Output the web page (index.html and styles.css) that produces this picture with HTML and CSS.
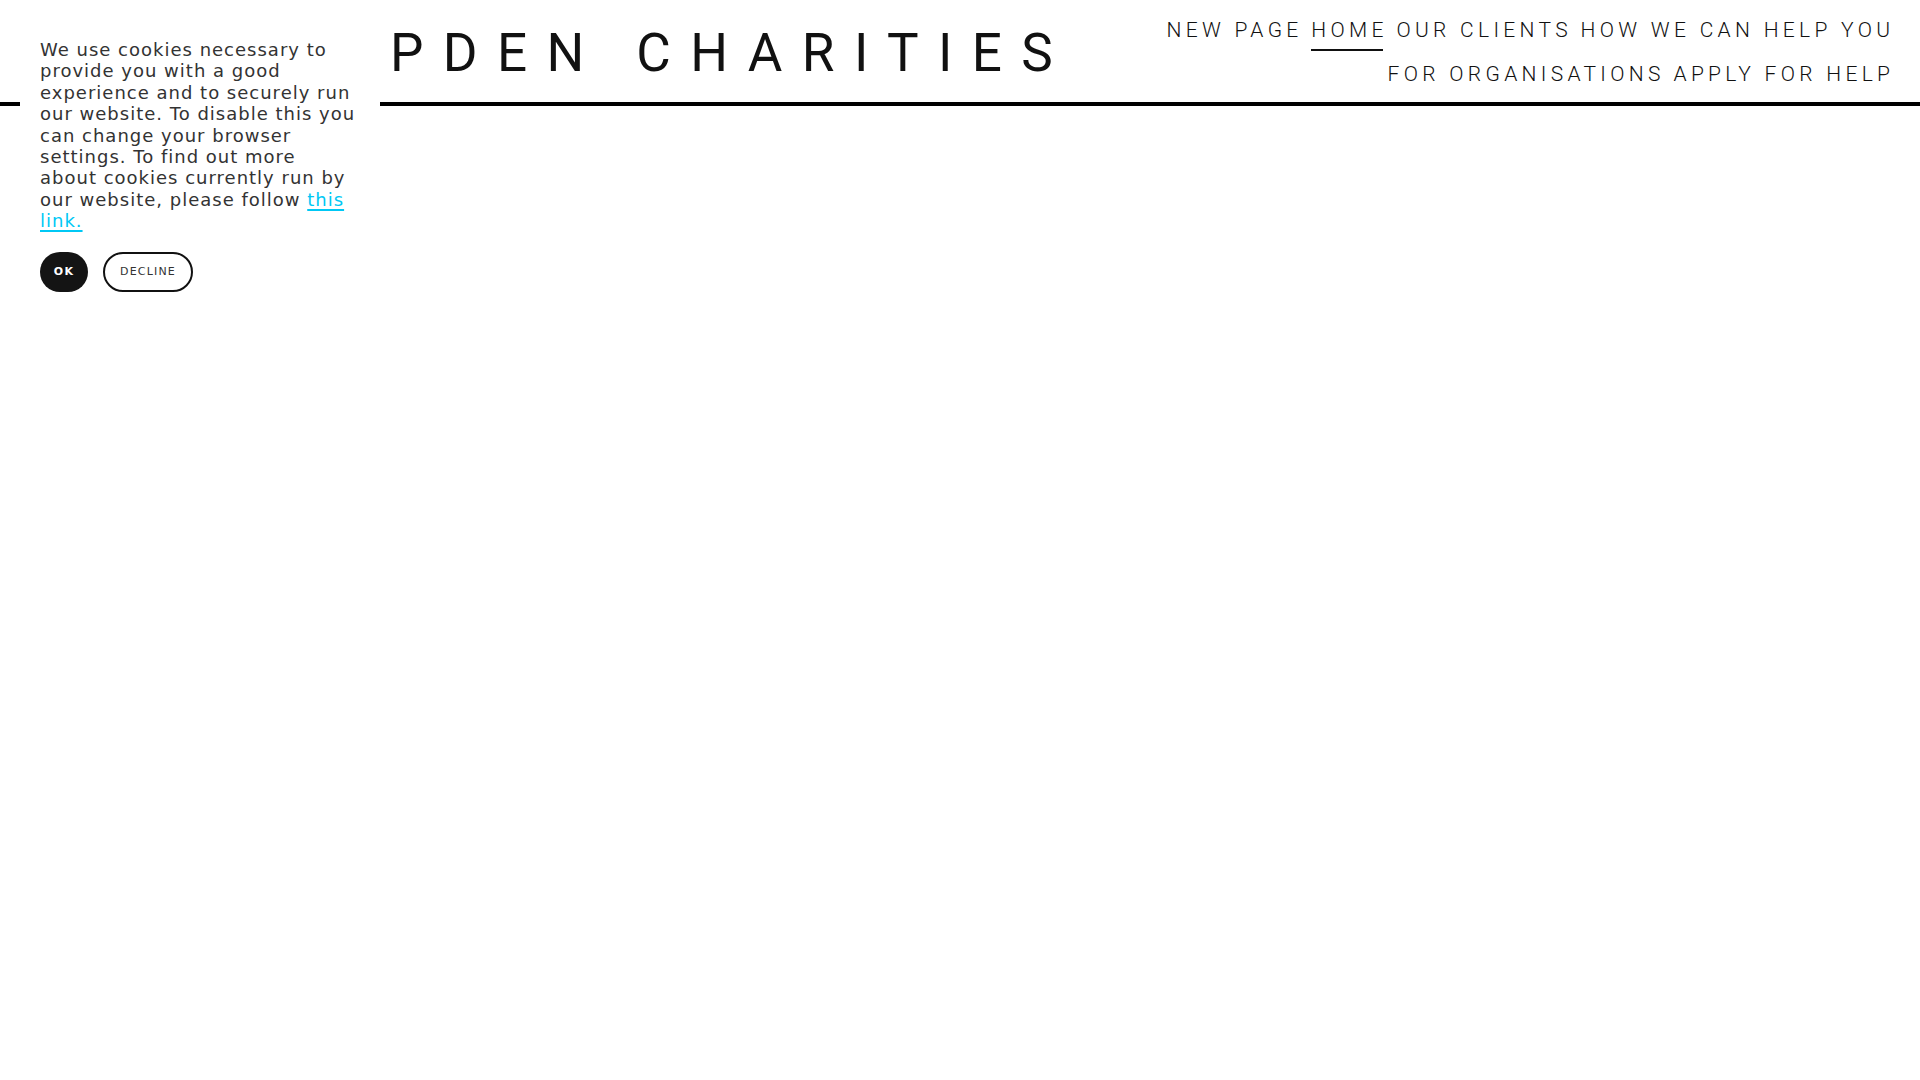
FILE: index.html
```html
<!DOCTYPE html>
<html lang="en">
<head>
<meta charset="utf-8">
<title>Charities</title>
<link rel="stylesheet" href="styles.css">
</head>
<body>
<header class="site-header">
  <a class="logo" href="#">PDEN CHARITIES</a>
  <nav class="main-nav">
    <a class="nav-link" href="#">NEW PAGE</a>
    <a class="nav-link active" href="#">HOME</a>
    <a class="nav-link" href="#">OUR CLIENTS</a>
    <a class="nav-link" href="#">HOW WE CAN HELP YOU</a>
    <a class="nav-link" href="#">FOR ORGANISATIONS</a>
    <a class="nav-link" href="#">APPLY FOR HELP</a>
  </nav>
</header>
<div class="cookie-panel">
  <p class="cookie-text">We use cookies necessary to provide you with a good experience and to securely run our website. To disable this you can change your browser settings. To find out more about cookies currently run by our website, please follow <a class="cookie-link" href="#">this link.</a></p>
  <div class="cookie-actions">
    <button class="btn btn-ok">OK</button>
    <button class="btn btn-decline">DECLINE</button>
  </div>
</div>
</body>
</html>
```
FILE: styles.css
```css
html, body {
  margin: 0;
  padding: 0;
  background: #fff;
}
body {
  font-family: Roboto, "Liberation Sans", sans-serif;
  color: #111;
}
.site-header {
  display: flex;
  justify-content: space-between;
  align-items: flex-start;
  height: 102px;
  border-bottom: 4px solid #000;
  padding: 0 30px 0 390px;
}
.logo {
  font-family: Roboto, sans-serif;
  font-size: 53px;
  font-weight: 400;
  letter-spacing: 19.4px;
  color: #111;
  text-decoration: none;
  line-height: 62px;
  margin-top: 22px;
}
.main-nav {
  display: flex;
  flex-wrap: wrap;
  justify-content: flex-end;
  width: 780px;
  padding-top: 8px;
}
.nav-link {
  position: relative;
  display: block;
  font-family: Roboto, sans-serif;
  font-weight: 300;
  font-size: 21px;
  letter-spacing: 4.3px;
  line-height: 24px;
  padding: 10px 0;
  margin-left: 13px;
  margin-right: -4.3px;
  color: #111;
  text-decoration: none;
}
.nav-link.active::after {
  content: "";
  position: absolute;
  left: 0;
  right: 4.3px;
  bottom: 1px;
  height: 2px;
  background: #111;
}
.cookie-panel {
  position: absolute;
  top: 0;
  left: 20px;
  width: 320px;
  padding: 39px 20px 20px;
  background: #fff;
}
.cookie-text {
  margin: 0;
  width: 317px;
  font-family: "DejaVu Sans", sans-serif;
  font-size: 18px;
  line-height: 21.4px;
  letter-spacing: 1px;
  color: #333;
}
.cookie-link {
  color: #00c8f5;
  text-decoration: underline;
  text-decoration-thickness: 2px;
  text-underline-offset: 3px;
}
.cookie-actions {
  display: flex;
  gap: 15px;
  margin-top: 20px;
}
.btn {
  height: 40px;
  border-radius: 20px;
  font-family: "DejaVu Sans", sans-serif;
  font-size: 11px;
  letter-spacing: 1.2px;
  cursor: pointer;
  padding: 0;
}
.btn-ok {
  width: 48px;
  background: #141414;
  color: #fff;
  font-weight: 700;
  border: none;
}
.btn-decline {
  width: 90px;
  background: #fff;
  color: #333;
  border: 2px solid #111;
}
```
